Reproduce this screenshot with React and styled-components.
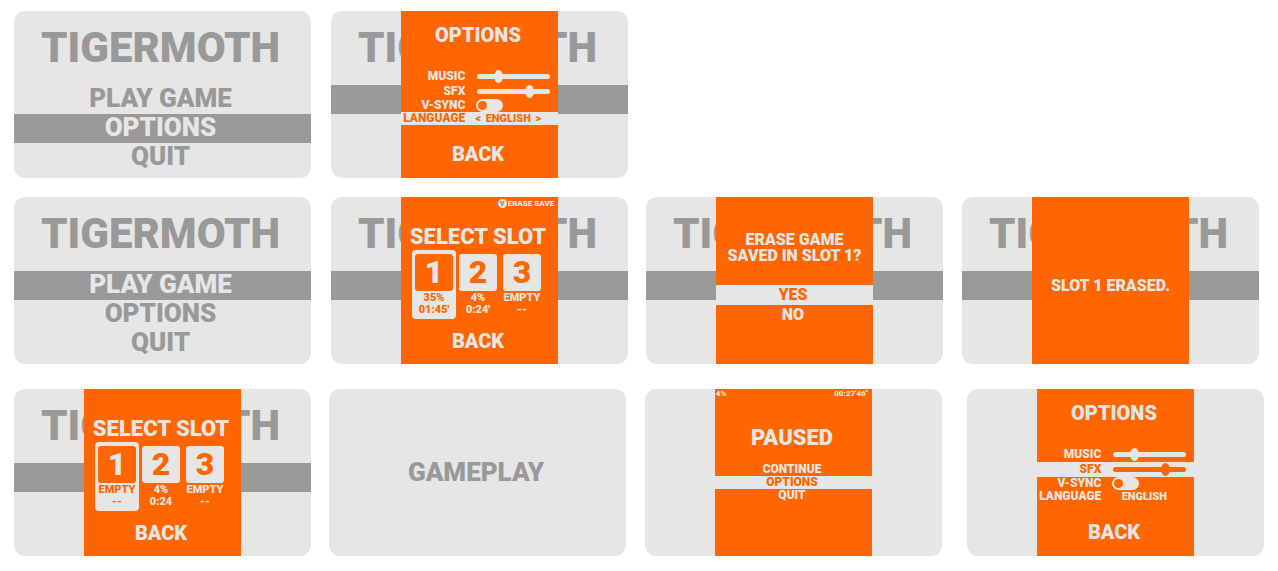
import React, { useId } from "react";
import styled, { createGlobalStyle, css } from "styled-components";

const LIGHT = "#e6e6e6";
const GREY = "#999999";
const ORANGE = "#ff6600";

const GlobalStyle = createGlobalStyle`
  *, *::before, *::after { box-sizing: border-box; }
  body {
    margin: 0;
    background: #ffffff;
    font-family: Roboto, "Liberation Sans", sans-serif;
    font-weight: 900;
    text-transform: uppercase;
  }
  h1, h2, p { margin: 0; font: inherit; }
  button, select, input { font: inherit; color: inherit; text-transform: inherit; margin: 0; }
`;

const Board = styled.main`
  display: flex;
  flex-direction: column;
  padding: 11px 14px;
`;

const Row = styled.div`
  display: flex;
  align-items: flex-start;
  margin-bottom: ${(p) => p.$after || 0}px;
`;

const Card = styled.section`
  flex: 0 0 23.76%;
  aspect-ratio: 297 / 167;
  display: grid;
  justify-items: center;
  align-items: stretch;
  margin-left: ${(p) => p.$lead || 0}px;
  border-radius: 11px;
  overflow: hidden;
  background: ${LIGHT};
  color: ${GREY};
`;

const Screen = styled.div`
  grid-area: 1 / 1;
  width: 100%;
  display: flex;
  flex-direction: column;
`;

const GameTitle = styled.h1`
  padding-right: 4px;
  font-size: 42px;
  line-height: 74px;
  text-align: center;
`;

const plainButton = css`
  display: block;
  border: 0;
  padding: 0;
  background: none;
  text-align: center;
  cursor: pointer;
`;

const MenuItem = styled.button`
  ${plainButton}
  width: 100%;
  height: 29px;
  padding: 0 4px 2px 0;
  font-size: 26px;
  line-height: 27px;
  background: ${(p) => (p.$active ? GREY : "transparent")};
  color: ${(p) => (p.$active ? LIGHT : GREY)};
`;

const MenuBand = styled.div`
  height: 29px;
  background: ${GREY};
`;

const Panel = styled.div`
  grid-area: 1 / 1;
  width: 53%;
  display: flex;
  flex-direction: column;
  background: ${ORANGE};
  color: ${LIGHT};
`;

const StatusLine = styled.div`
  display: flex;
  justify-content: ${(p) => (p.$end ? "flex-end" : "space-between")};
  align-items: center;
  height: 13px;
  padding: 0 4px 4px 1px;
  font-size: 8px;
  line-height: 9px;
`;

const HintButton = styled.button`
  ${plainButton}
  display: flex;
  align-items: center;
  gap: 1px;
  height: 9px;
  margin-top: 4px;
`;

const KeyCap = styled.span`
  width: 9px;
  height: 9px;
  border-radius: 50%;
  background: ${LIGHT};
  color: ${ORANGE};
  text-align: center;
`;

const PanelTitle = styled.h2`
  margin: ${(p) => p.$top}px 0 ${(p) => p.$bottom}px;
  padding-right: 3px;
  font-size: ${(p) => (p.$large ? 22 : 20)}px;
  line-height: 24px;
  text-align: center;
  white-space: nowrap;
`;

const BackButton = styled.button`
  ${plainButton}
  align-self: center;
  margin-top: ${(p) => p.$top}px;
  padding-right: 3px;
  font-size: 20px;
  line-height: 24px;
`;

const OptionRow = styled.div`
  display: flex;
  align-items: center;
  height: ${(p) => (p.$tall ? 15 : 13)}px;
  background: ${(p) => (p.$active ? LIGHT : "transparent")};
  color: ${(p) => (p.$active ? ORANGE : LIGHT)};
`;

const OptionLabel = styled.label`
  flex: 0 0 41%;
  padding-bottom: 1px;
  font-size: 12px;
  line-height: 12px;
  text-align: right;
  white-space: nowrap;
`;

const Slider = styled.input`
  appearance: none;
  flex: 1;
  min-width: 0;
  height: 13px;
  margin: 0 8px 0 12px;
  background: none;

  &::-webkit-slider-runnable-track {
    height: 5px;
    border-radius: 3px;
    background: currentColor;
  }
  &::-webkit-slider-thumb {
    appearance: none;
    width: 9px;
    height: 13px;
    margin-top: -4px;
    border-radius: 50%;
    background: currentColor;
  }
`;

const Toggle = styled.input`
  appearance: none;
  width: 27px;
  height: 13px;
  margin: 0 0 0 11px;
  padding: 2px;
  border-radius: 7px;
  background: ${LIGHT};

  &::before {
    content: "";
    display: block;
    width: 9px;
    height: 9px;
    border-radius: 50%;
    background: ${ORANGE};
  }
  &:checked::before { margin-left: auto; }
`;

const Stepper = styled.div`
  display: flex;
  justify-content: center;
  width: 68px;
  margin-left: 9px;
  font-size: 11px;
  line-height: 13px;
`;

const StepButton = styled.button`
  ${plainButton}
  width: 8px;
`;

const LanguageSelect = styled.select`
  appearance: none;
  width: 52px;
  height: 13px;
  border: 0;
  padding: 0;
  background: none;
  text-align: center;
  text-align-last: center;
`;

const SlotList = styled.div`
  display: flex;
  justify-content: center;
  padding-right: 3px;
`;

const Slot = styled.button`
  ${plainButton}
  width: 44px;
  padding: 4px 3px 3px;
  border-radius: 4px;
  font-size: 11px;
  line-height: 12px;
  background: ${(p) => (p.$active ? LIGHT : "transparent")};
  color: ${(p) => (p.$active ? ORANGE : LIGHT)};
`;

const SlotNumber = styled.span`
  display: block;
  margin-bottom: 1px;
  border-radius: 3px;
  font-size: 32px;
  line-height: 37px;
  background: ${(p) => (p.$active ? ORANGE : LIGHT)};
  color: ${(p) => (p.$active ? LIGHT : ORANGE)};
`;

const SlotLine = styled.span`
  display: block;
`;

const Message = styled.p`
  margin-top: ${(p) => p.$top}px;
  font-size: 16px;
  line-height: 16px;
  text-align: center;
  white-space: nowrap;
`;

const Choices = styled.div`
  display: flex;
  flex-direction: column;
  margin-top: ${(p) => p.$top || 0}px;
`;

const Choice = styled.button`
  ${plainButton}
  height: ${(p) => (p.$small ? 13 : 20)}px;
  padding: 0 3px 1px 0;
  font-size: ${(p) => (p.$small ? 12 : 16)}px;
  line-height: ${(p) => (p.$small ? 12 : 19)}px;
  background: ${(p) => (p.$active ? LIGHT : "transparent")};
  color: ${(p) => (p.$active ? ORANGE : LIGHT)};
`;

const Gameplay = styled.p`
  grid-area: 1 / 1;
  align-self: center;
  padding: 0 3px 2px 0;
  font-size: 26px;
  line-height: 28px;
`;

function StartMenu({ active }) {
  return (
    <Screen>
      <GameTitle>Tigermoth</GameTitle>
      {["Play game", "Options", "Quit"].map((item) => (
        <MenuItem key={item} type="button" $active={item === active}>
          {item}
        </MenuItem>
      ))}
    </Screen>
  );
}

function Backdrop() {
  return (
    <Screen>
      <GameTitle>Tigermoth</GameTitle>
      <MenuBand />
    </Screen>
  );
}

function OptionsPanel({ active }) {
  const id = useId();
  const isLanguage = active === "language";
  return (
    <Panel>
      <PanelTitle $top={12} $bottom={22}>Options</PanelTitle>
      <OptionRow $tall $active={active === "music"}>
        <OptionLabel htmlFor={id + "music"}>Music</OptionLabel>
        <Slider id={id + "music"} type="range" defaultValue={26} />
      </OptionRow>
      <OptionRow $tall $active={active === "sfx"}>
        <OptionLabel htmlFor={id + "sfx"}>SFX</OptionLabel>
        <Slider id={id + "sfx"} type="range" defaultValue={74} />
      </OptionRow>
      <OptionRow>
        <OptionLabel htmlFor={id + "vsync"}>V-Sync</OptionLabel>
        <Toggle id={id + "vsync"} type="checkbox" />
      </OptionRow>
      <OptionRow $active={isLanguage}>
        <OptionLabel htmlFor={id + "language"}>Language</OptionLabel>
        <Stepper>
          {isLanguage && <StepButton type="button">&lt;</StepButton>}
          <LanguageSelect id={id + "language"} defaultValue="en">
            <option value="en">ENGLISH</option>
          </LanguageSelect>
          {isLanguage && <StepButton type="button">&gt;</StepButton>}
        </Stepper>
      </OptionRow>
      <BackButton type="button" $top={17}>Back</BackButton>
    </Panel>
  );
}

function SlotPanel({ slots, eraseHint }) {
  return (
    <Panel>
      <StatusLine $end>
        {eraseHint && (
          <HintButton type="button">
            <KeyCap>Y</KeyCap>
            Erase save
          </HintButton>
        )}
      </StatusLine>
      <PanelTitle $large $top={15} $bottom={1}>Select slot</PanelTitle>
      <SlotList>
        {slots.map(([progress, time], i) => (
          <Slot key={i} type="button" $active={i === 0}>
            <SlotNumber $active={i === 0}>{i + 1}</SlotNumber>
            <SlotLine>{progress}</SlotLine>
            <SlotLine>{time}</SlotLine>
          </Slot>
        ))}
      </SlotList>
      <BackButton type="button" $top={10}>Back</BackButton>
    </Panel>
  );
}

export default function App() {
  return (
    <>
      <GlobalStyle />
      <Board>
        <Row $after={19}>
          <Card>
            <StartMenu active="Options" />
          </Card>
          <Card $lead={20}>
            <Backdrop />
            <OptionsPanel active="language" />
          </Card>
        </Row>

        <Row $after={25}>
          <Card>
            <StartMenu active="Play game" />
          </Card>
          <Card $lead={20}>
            <Backdrop />
            <SlotPanel
              eraseHint
              slots={[["35%", "01:45'"], ["4%", "0:24'"], ["Empty", "--"]]}
            />
          </Card>
          <Card $lead={18}>
            <Backdrop />
            <Panel>
              <Message $top={35}>
                Erase game
                <br />
                saved in slot 1?
              </Message>
              <Choices $top={21}>
                <Choice type="button" $active>Yes</Choice>
                <Choice type="button">No</Choice>
              </Choices>
            </Panel>
          </Card>
          <Card $lead={19}>
            <Backdrop />
            <Panel>
              <Message $top={81}>Slot 1 erased.</Message>
            </Panel>
          </Card>
        </Row>

        <Row>
          <Card>
            <Backdrop />
            <SlotPanel slots={[["Empty", "--"], ["4%", "0:24"], ["Empty", "--"]]} />
          </Card>
          <Card $lead={18}>
            <Gameplay>Gameplay</Gameplay>
          </Card>
          <Card $lead={19}>
            <Panel>
              <StatusLine>
                <span>4%</span>
                <span>00:27'46"</span>
              </StatusLine>
              <PanelTitle $large $top={24} $bottom={13}>Paused</PanelTitle>
              <Choices>
                <Choice type="button" $small>Continue</Choice>
                <Choice type="button" $small $active>Options</Choice>
                <Choice type="button" $small>Quit</Choice>
              </Choices>
            </Panel>
          </Card>
          <Card $lead={25}>
            <OptionsPanel active="sfx" />
          </Card>
        </Row>
      </Board>
    </>
  );
}
